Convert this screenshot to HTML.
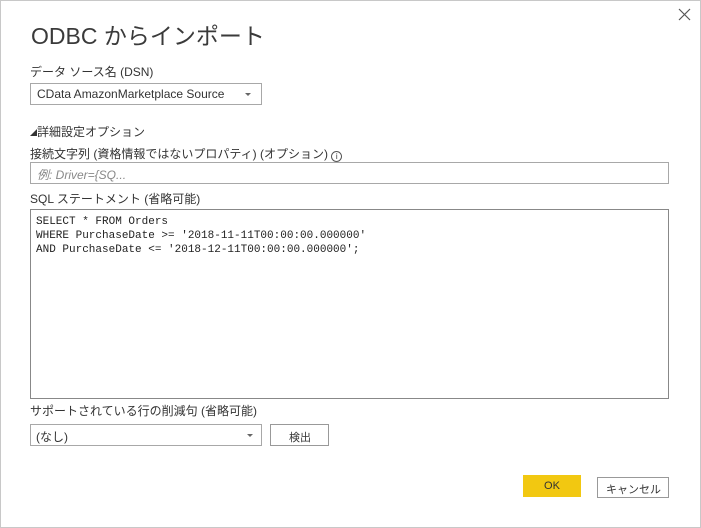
<!DOCTYPE html>
<html><head><meta charset="utf-8"><style>
*{box-sizing:border-box;margin:0;padding:0}
body{width:701px;height:528px;background:#fff;font-family:"Liberation Sans","Noto Sans CJK JP",sans-serif;color:#333;position:relative;overflow:hidden}
.frame{position:absolute;left:0;top:0;width:701px;height:528px;border:1px solid #c8c8c8}
.a{position:absolute;white-space:nowrap}
.lbl{font-size:12px;color:#333}
.box{position:absolute;border:1px solid #a8a8a8;background:#fff}
.arrow{position:absolute;width:0;height:0;border-left:3px solid transparent;border-right:3px solid transparent;border-top:3px solid #666}
.mono{font-family:"Liberation Mono","Noto Sans CJK JP",monospace;font-size:11px;line-height:14px;color:#222}
</style></head><body>
<div class="frame"></div>
<svg class="a" style="left:678px;top:8px" width="13" height="13" viewBox="0 0 13 13"><path d="M1 1L12 12M12 1L1 12" stroke="#555" stroke-width="1.2"/></svg>
<div class="a" style="left:31px;top:17px;font-size:23px;color:#3a3a3a">ODBC からインポート</div>
<div class="a lbl" style="left:30px;top:63px">データ ソース名 (DSN)</div>
<div class="box" style="left:30px;top:83px;width:232px;height:22px"><span class="a" style="left:6px;top:3px;font-size:12px">CData AmazonMarketplace Source</span><div class="arrow" style="left:214px;top:9px"></div></div>
<div class="a lbl" style="left:30px;top:123px"><span style="font-size:7px;vertical-align:1px">◢</span>詳細設定オプション</div>
<div class="a lbl" style="left:30px;top:145px">接続文字列 (資格情報ではないプロパティ) (オプション) <span style="display:inline-block;width:11px;height:11px;border:1px solid #555;border-radius:50%;font-size:8px;text-align:center;line-height:9px;vertical-align:-1px">i</span></div>
<div class="box" style="left:30px;top:162px;width:639px;height:22px"><span class="a" style="left:6px;top:3px;font-size:12px;font-style:italic;color:#888">例: Driver={SQ...</span></div>
<div class="a lbl" style="left:30px;top:190px">SQL ステートメント (省略可能)</div>
<div class="box" style="left:30px;top:209px;width:639px;height:190px;border-color:#888"><div class="a mono" style="left:5px;top:5px">SELECT * FROM Orders<br>WHERE PurchaseDate &gt;= '2018-11-11T00:00:00.000000'<br>AND PurchaseDate &lt;= '2018-12-11T00:00:00.000000';</div></div>
<div class="a lbl" style="left:30px;top:402px">サポートされている行の削減句 (省略可能)</div>
<div class="box" style="left:30px;top:424px;width:232px;height:22px"><span class="a" style="left:5px;top:3px;font-size:12px">(なし)</span><div class="arrow" style="left:216px;top:9px"></div></div>
<div class="box" style="left:270px;top:424px;width:59px;height:22px;border-color:#999"><span class="a" style="left:18px;top:4px;font-size:11px">検出</span></div>
<div class="a" style="left:523px;top:475px;width:58px;height:22px;background:#f2c811;font-size:11px;text-align:center;line-height:22px">OK</div>
<div class="box" style="left:597px;top:477px;width:72px;height:21px;border-color:#999"><span class="a" style="left:8px;top:3px;font-size:11px">キャンセル</span></div>
</body></html>
